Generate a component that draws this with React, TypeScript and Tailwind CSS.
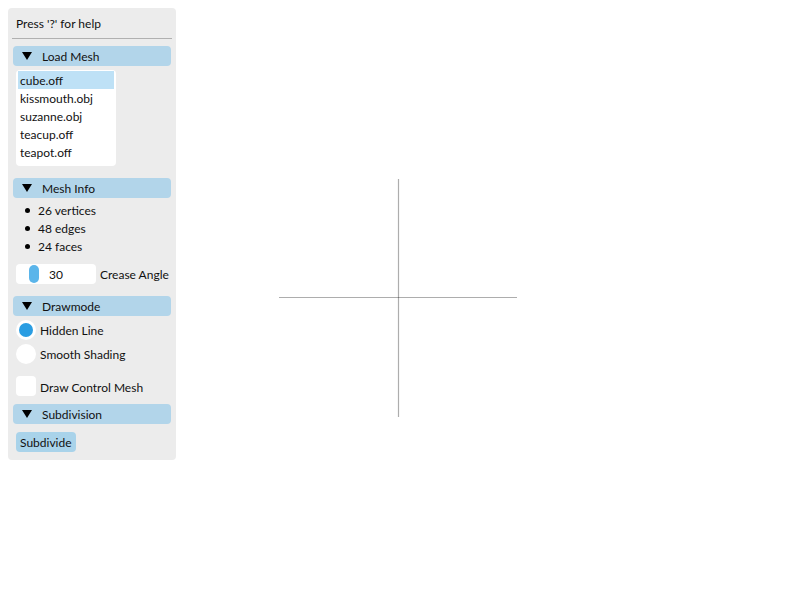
import React, { useState } from "react"

const meshes = ["cube.off", "kissmouth.obj", "suzanne.obj", "teacup.off", "teapot.off"]

function Header({ title }: { title: string }) {
  return (
    <div className="mx-[5px] h-5 rounded bg-[#b2d5ea] flex items-center text-[12px] text-[#111]">
      <svg className="ml-[9px]" width="10" height="8" viewBox="0 0 10 8">
        <polygon points="0,0 10,0 5,8" fill="#000" />
      </svg>
      <span className="ml-[10px] pt-[2px]">{title}</span>
    </div>
  )
}

export default function App() {
  const [selected, setSelected] = useState(0)
  const [mode, setMode] = useState("hidden")
  const [control, setControl] = useState(false)

  return (
    <div
      className="relative w-[796px] h-[597px] bg-white overflow-hidden"
      style={{ fontFamily: "Lato, 'Noto Sans', sans-serif" }}
    >
      {/* VIEWPORT */}
      <svg className="absolute inset-0" width="796" height="597">
        <line x1="279" y1="297.5" x2="517" y2="297.5" stroke="rgba(0,0,0,0.32)" strokeWidth="1.2" />
        <line x1="398.5" y1="179" x2="398.5" y2="417" stroke="rgba(0,0,0,0.32)" strokeWidth="1.2" />
      </svg>

      {/* PANEL */}
      <div className="absolute left-2 top-2 w-[168px] h-[452px] rounded bg-[#ececec] text-[12px] text-[#111]">
        <div className="px-2 pt-[9px] h-[30px] leading-[14px]">Press '?' for help</div>
        <div className="mx-1 h-px bg-[#b0b0b0]" />

        <div className="mt-[7px]">
          <Header title="Load Mesh" />
        </div>

        <div className="ml-2 mt-1 w-[100px] h-[96px] rounded bg-white py-px px-[2px]">
          {meshes.map((m, i) => (
            <div
              key={m}
              onClick={() => setSelected(i)}
              className={
                "h-[18px] leading-[18px] pt-px pl-[2px] " + (i === selected ? "bg-[#bee1f6]" : "")
              }
            >
              {m}
            </div>
          ))}
        </div>

        <div className="mt-3">
          <Header title="Mesh Info" />
        </div>

        <div className="mt-[3px]">
          {["26 vertices", "48 edges", "24 faces"].map((t) => (
            <div key={t} className="h-[18px] flex items-center">
              <span className="ml-[17px] w-[5px] h-[5px] rounded-full bg-black" />
              <span className="ml-[8px] pt-px">{t}</span>
            </div>
          ))}
        </div>

        <div className="mt-[9px] flex items-center">
          <div className="ml-2 w-[80px] h-5 rounded bg-white flex items-center">
            <span className="ml-[13px] w-[10px] h-[18px] rounded-full bg-[#5bb5ea]" />
            <span className="ml-[10px] pt-[2px]">30</span>
          </div>
          <span className="ml-1 pt-[2px]">Crease Angle</span>
        </div>

        <div className="mt-3">
          <Header title="Drawmode" />
        </div>

        <div className="mt-1">
          <div className="h-[20px] flex items-center cursor-pointer" onClick={() => setMode("hidden")}>
            <span className="ml-2 w-5 h-5 rounded-full bg-white flex items-center justify-center">
              {mode === "hidden" && <span className="w-[14px] h-[14px] rounded-full bg-[#2a9de2]" />}
            </span>
            <span className="ml-1 pt-[2px]">Hidden Line</span>
          </div>
          <div className="mt-1 h-[20px] flex items-center cursor-pointer" onClick={() => setMode("smooth")}>
            <span className="ml-2 w-5 h-5 rounded-full bg-white flex items-center justify-center">
              {mode === "smooth" && <span className="w-[14px] h-[14px] rounded-full bg-[#2a9de2]" />}
            </span>
            <span className="ml-1 pt-[2px]">Smooth Shading</span>
          </div>
        </div>

        <div className="mt-3 h-5 flex items-center cursor-pointer" onClick={() => setControl(!control)}>
          <span className="ml-2 w-5 h-5 rounded bg-white flex items-center justify-center text-[#2a9de2]">
            {control ? "✓" : ""}
          </span>
          <span className="ml-1 pt-[3px]">Draw Control Mesh</span>
        </div>

        <div className="mt-2">
          <Header title="Subdivision" />
        </div>

        <button className="ml-2 mt-2 h-5 px-[4px] pt-px rounded bg-[#a9d3ea] text-[12px] leading-5">
          Subdivide
        </button>
      </div>
    </div>
  )
}
